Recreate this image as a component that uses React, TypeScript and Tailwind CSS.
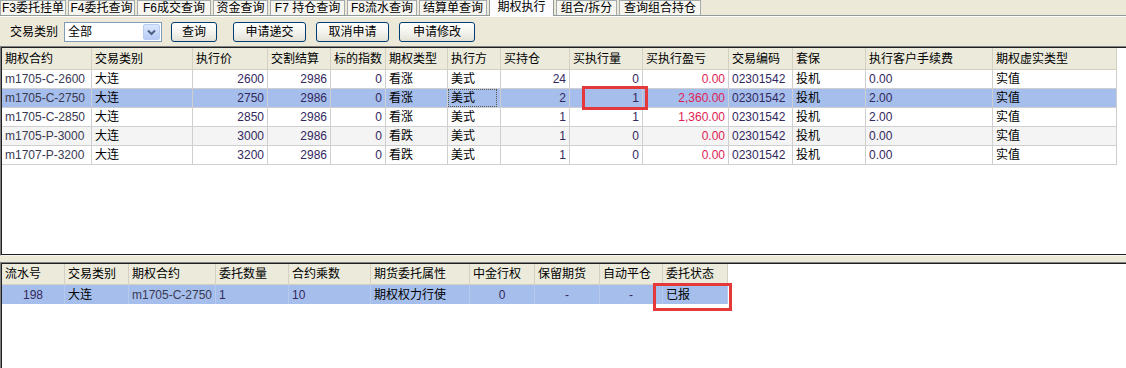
import React from "react";

const FONT = "font-['Liberation_Sans','Noto_Sans_CJK_SC',sans-serif]";

const tabs = [
  { label: "F3委托挂单", w: "w-[66px]" },
  { label: "F4委托查询", w: "w-[67px]" },
  { label: "F6成交查询", w: "w-[74px]" },
  { label: "资金查询", w: "w-[55px]" },
  { label: "F7 持仓查询", w: "w-[75px]" },
  { label: "F8流水查询", w: "w-[70px]" },
  { label: "结算单查询", w: "w-[68px]" },
  { label: "期权执行", w: "w-[65px]", active: true },
  { label: "组合/拆分", w: "w-[61px]" },
  { label: "查询组合持仓", w: "w-[82px]" },
];

type Align = "l" | "r" | "c";
const topCols: { h: string; a: Align; kind?: "num" | "red" | "code" }[] = [
  { h: "期权合约", a: "l", kind: "code" },
  { h: "交易类别", a: "l" },
  { h: "执行价", a: "r", kind: "num" },
  { h: "交割结算", a: "r", kind: "num" },
  { h: "标的指数", a: "r", kind: "num" },
  { h: "期权类型", a: "l" },
  { h: "执行方", a: "l" },
  { h: "买持仓", a: "r", kind: "num" },
  { h: "买执行量", a: "r", kind: "num" },
  { h: "买执行盈亏", a: "r", kind: "red" },
  { h: "交易编码", a: "l", kind: "num" },
  { h: "套保", a: "l" },
  { h: "执行客户手续费", a: "l", kind: "num" },
  { h: "期权虚实类型", a: "l" },
];

const topRows = [
  ["m1705-C-2600", "大连", "2600", "2986", "0", "看涨", "美式", "24", "0", "0.00", "02301542", "投机", "0.00", "实值"],
  ["m1705-C-2750", "大连", "2750", "2986", "0", "看涨", "美式", "2", "1", "2,360.00", "02301542", "投机", "2.00", "实值"],
  ["m1705-C-2850", "大连", "2850", "2986", "0", "看涨", "美式", "1", "1", "1,360.00", "02301542", "投机", "2.00", "实值"],
  ["m1705-P-3000", "大连", "3000", "2986", "0", "看跌", "美式", "1", "0", "0.00", "02301542", "投机", "0.00", "实值"],
  ["m1707-P-3200", "大连", "3200", "2986", "0", "看跌", "美式", "1", "0", "0.00", "02301542", "投机", "0.00", "实值"],
];

const botCols: { h: string; a: Align; kind?: "num" | "code" }[] = [
  { h: "流水号", a: "c", kind: "num" },
  { h: "交易类别", a: "l" },
  { h: "期权合约", a: "l", kind: "code" },
  { h: "委托数量", a: "l", kind: "num" },
  { h: "合约乘数", a: "l", kind: "num" },
  { h: "期货委托属性", a: "l" },
  { h: "中金行权", a: "c", kind: "num" },
  { h: "保留期货", a: "c", kind: "num" },
  { h: "自动平仓", a: "c", kind: "num" },
  { h: "委托状态", a: "l" },
];
const botRow = ["198", "大连", "m1705-C-2750", "1", "10", "期权权力行使", "0", "-", "-", "已报"];

const alignCls = (a: Align) =>
  a === "l" ? "justify-start pl-[3px]" : a === "r" ? "justify-end pr-[3px]" : "justify-center";

const colorCls = (k?: string) =>
  k === "red" ? "text-[#DE1D55]" : k === "num" ? "text-[#33285E]" : k === "code" ? "text-[#3A3A52]" : "text-black";

const TOP_GRID = "grid w-fit grid-cols-[90px_101px_75px_63px_55px_62px_53px_69px_73px_86px_64px_73px_127px_124px]";
const BOT_GRID = "grid w-fit grid-cols-[63px_64px_87px_73px_82px_99px_65px_65px_63px_65px]";

function Chevron() {
  return (
    <svg width="9" height="7" viewBox="0 0 9 7">
      <path d="M1 1.5 L4.5 5 L8 1.5" stroke="#4D6185" strokeWidth="2" fill="none" />
    </svg>
  );
}

function Btn({ label, w }: { label: string; w: string }) {
  return (
    <div
      className={`${w} h-[20px] rounded-[3px] border border-[#003C74] bg-gradient-to-b from-white via-[#F4F3EE] to-[#E3E1D6] flex items-center justify-center text-black`}
    >
      {label}
    </div>
  );
}

export default function App() {
  return (
    <div className={`${FONT} relative w-[1126px] h-[368px] overflow-hidden bg-[#ECE9D8] text-[12px] leading-none flex flex-col`}>
      {/* Tab strip */}
      <div className="h-[16px] flex items-end gap-[2px] border-b border-[#919B9C] shrink-0">
        {tabs.map((t) => (
          <div
            key={t.label}
            className={
              t.active
                ? `${t.w} h-[17px] -mb-px relative z-10 bg-[#FCFCFE] border-t border-l border-r border-[#919B9C] flex items-center justify-center pb-[2px] text-black`
                : `${t.w} h-[15px] bg-[#F6F5F0] border-t border-l border-r border-[#A5ACAE] flex items-center justify-center text-black`
            }
          >
            {t.label}
          </div>
        ))}
      </div>

      {/* Toolbar */}
      <div className="h-[30px] shrink-0 flex items-start pt-[5px] border-t border-white">
        <div className="ml-[10px] w-[54px] h-[20px] flex items-center">交易类别</div>
        <div className="w-[98px] h-[20px] border border-[#7F9DB9] bg-white flex items-center justify-between pl-[3px] pr-[1px]">
          <span>全部</span>
          <div className="w-[17px] h-[16px] rounded-[2px] border border-[#B9CCF4] bg-gradient-to-b from-[#DCE7FD] to-[#B7CBF7] flex items-center justify-center">
            <Chevron />
          </div>
        </div>
        <div className="ml-[9px]">
          <Btn label="查询" w="w-[46px]" />
        </div>
        <div className="ml-[16px]">
          <Btn label="申请递交" w="w-[73px]" />
        </div>
        <div className="ml-[10px]">
          <Btn label="取消申请" w="w-[73px]" />
        </div>
        <div className="ml-[10px]">
          <Btn label="申请修改" w="w-[76px]" />
        </div>
      </div>

      {/* Top panel */}
      <div className="h-[210px] shrink-0 border-t border-l border-[#808080] border-b border-b-[#F5F4EE]">
        <div className="h-full border-t border-l border-b border-[#202020] bg-white overflow-hidden">
          <div className={`${TOP_GRID} h-[22px] bg-[#EBEADB]`}>
            {topCols.map((c) => (
              <div
                key={c.h}
                className="flex items-center pl-[3px] border-r border-b border-[#D4D0C2] text-black"
              >
                {c.h}
              </div>
            ))}
          </div>
          {topRows.map((r, i) => {
            const sel = i === 1;
            const bg = sel ? "bg-[#A6BEEB]" : i % 2 === 1 ? "bg-[#F4F4F4]" : "bg-white";
            return (
              <div key={i} className={`${TOP_GRID} h-[19px] ${bg}`}>
                {r.map((v, j) => {
                  const c = topCols[j];
                  const focus = sel && j === 6;
                  return (
                    <div
                      key={j}
                      className={`flex items-center ${alignCls(c.a)} ${colorCls(c.kind)} border-r border-b border-[#CFCFCF]`}
                    >
                      {focus ? (
                        <div className="w-full h-full -ml-[3px] pl-[2px] border border-dotted border-[#555] flex items-center">
                          {v}
                        </div>
                      ) : (
                        v
                      )}
                    </div>
                  );
                })}
              </div>
            );
          })}
        </div>
      </div>

      {/* Splitter */}
      <div className="h-[6px] shrink-0 bg-[#ECE9D8]" />

      {/* Bottom panel */}
      <div className="flex-1 border-t border-l border-[#808080]">
        <div className="h-full border-t border-l border-[#202020] bg-white overflow-hidden">
          <div className={`${BOT_GRID} h-[21px] bg-[#EBEADB]`}>
            {botCols.map((c) => (
              <div key={c.h} className="flex items-center pl-[3px] border-r border-b border-[#D4D0C2] text-black">
                {c.h}
              </div>
            ))}
          </div>
          <div className={`${BOT_GRID} h-[19px] bg-[#A6BEEB]`}>
            {botRow.map((v, j) => {
              const c = botCols[j];
              return (
                <div
                  key={j}
                  className={`flex items-center ${alignCls(c.a)} ${colorCls(c.kind)} border-r border-[#B7C9EC]`}
                >
                  {v}
                </div>
              );
            })}
          </div>
        </div>
      </div>

      {/* Red annotation boxes */}
      <div className="absolute left-[582px] top-[86px] w-[66px] h-[24px] border-[3px] border-[#E5383B]" />
      <div className="absolute left-[653px] top-[283px] w-[79px] h-[28px] border-[3px] border-[#E5383B]" />
    </div>
  );
}
